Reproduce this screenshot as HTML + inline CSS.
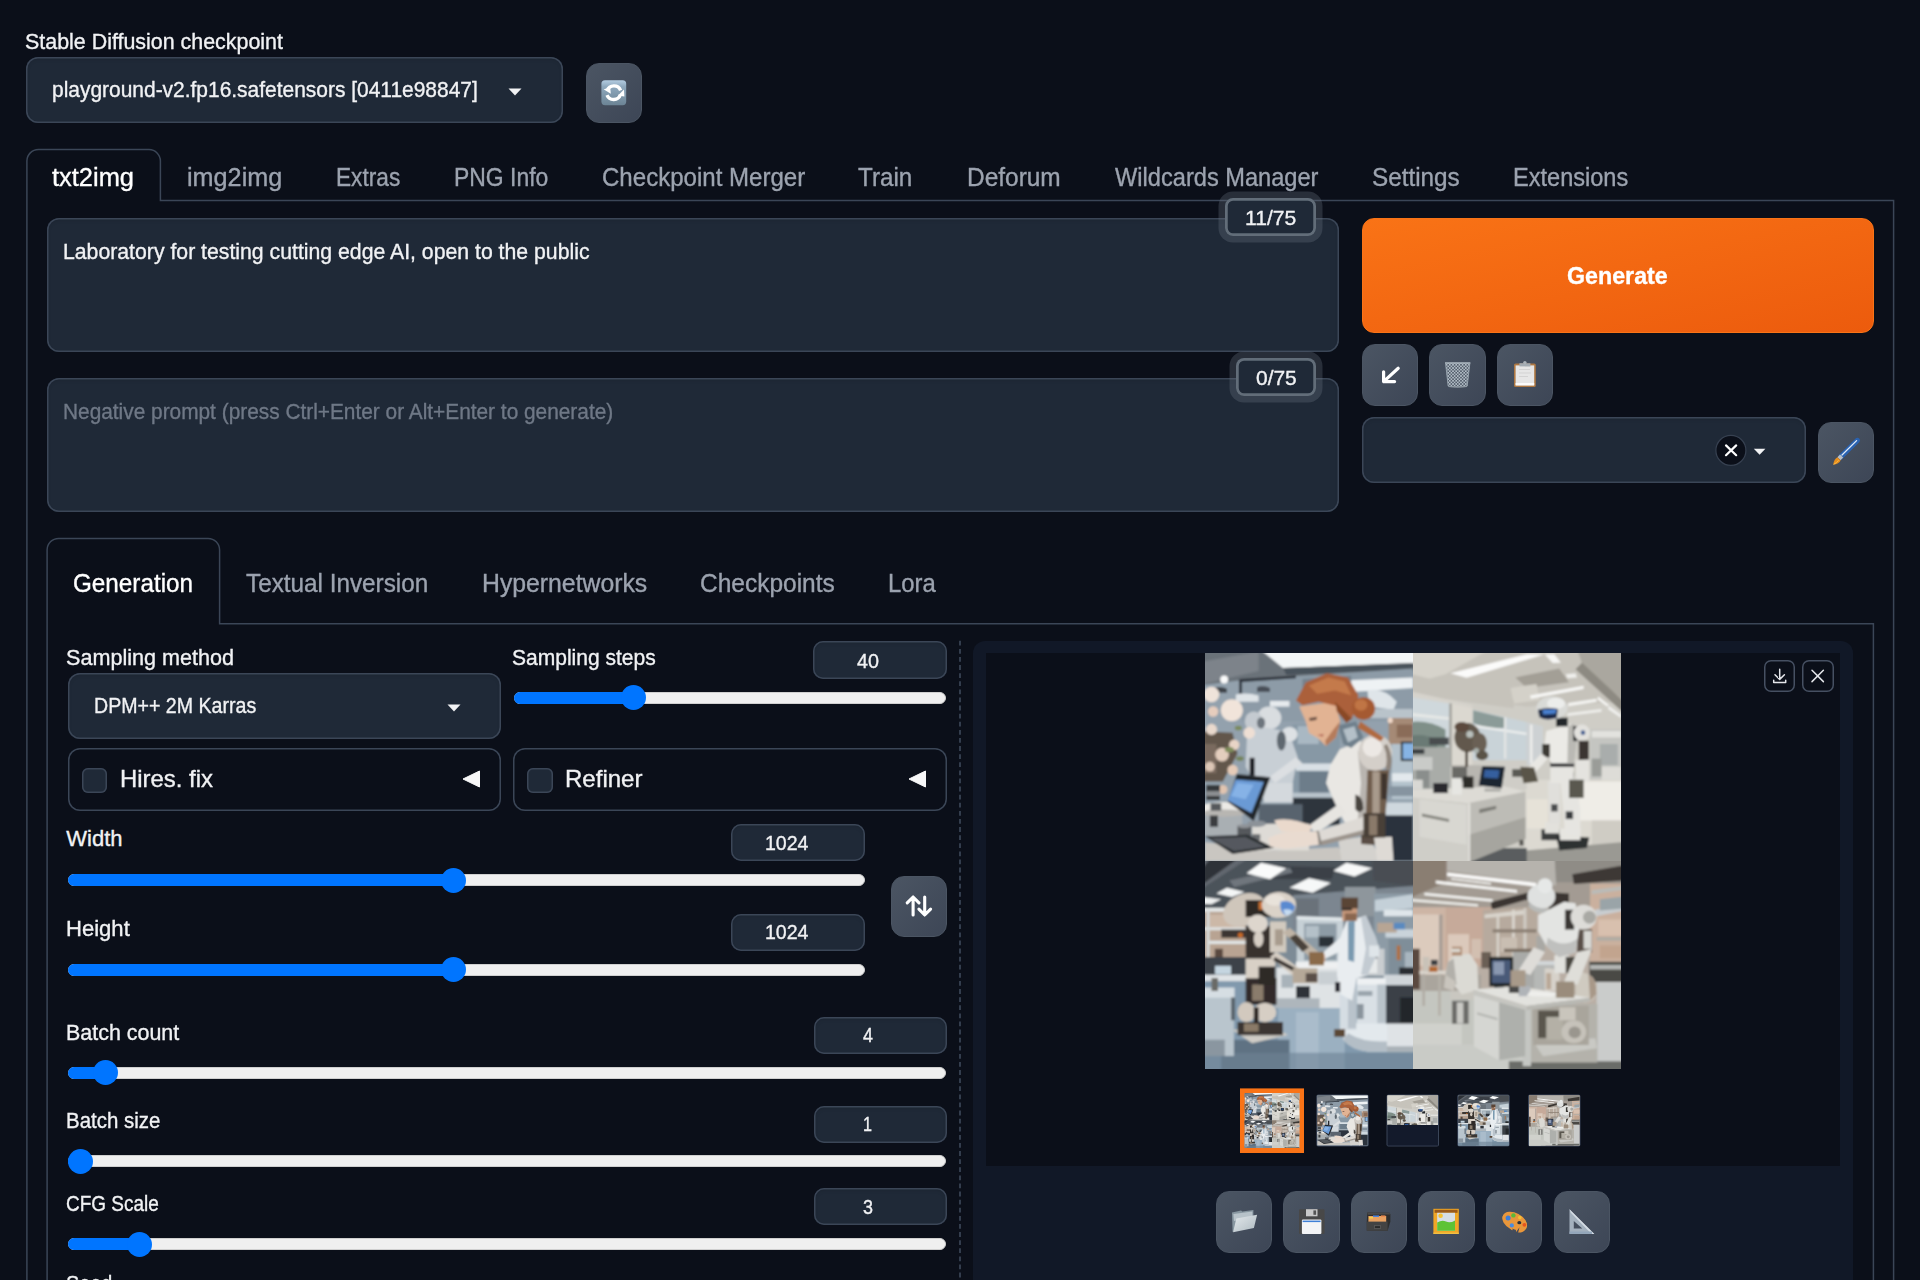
<!DOCTYPE html>
<html><head><meta charset="utf-8"><title>Stable Diffusion</title>
<style>
html,body{margin:0;padding:0;background:#0b0f19;overflow:hidden;}
#root{position:relative;width:1920px;height:1280px;overflow:hidden;background:#0b0f19;}
body{width:1920px;height:1280px;overflow:hidden;position:relative;font-family:"Liberation Sans",sans-serif;}
.b{position:absolute;box-sizing:border-box;}
.t{position:absolute;white-space:nowrap;line-height:1;-webkit-text-stroke:0.35px currentColor;transform-origin:0 50%;display:inline-block;}
.inp{background:#1f2937;border-radius:12px;box-shadow:inset 0 0 0 1.5px #3b4657,inset 0 2px 4px rgba(0,0,0,.12);}
.num{background:#1f2937;border-radius:10px;box-shadow:inset 0 0 0 1.5px #3b4657,inset 0 2px 4px rgba(0,0,0,.12);}
.acc{border-radius:12px;box-shadow:inset 0 0 0 1.5px #3b4657;}
.chk{background:#1f2937;border-radius:6px;box-shadow:inset 0 0 0 1.5px #3b4657;}
.btn{background:linear-gradient(to bottom right,#4b5563,#3d4656);border:1px solid #4b5563;border-radius:13px;}
.btn svg{position:absolute;left:-1px;top:-1px;}
.gbtn{background:#0b0f19;border-radius:7px;box-shadow:inset 0 0 0 1.5px #465062;}
.gbtn svg{position:absolute;left:0;top:0;}
.tok{background:#1f2937;border-radius:8px;box-shadow:inset 0 0 0 2.75px #626d79,0 0 0 6.5px rgba(110,118,132,.3);}
.gen{background:linear-gradient(to bottom right,#f97316,#ec5b0d);border-radius:12px;border:1px solid #f97316;}
.trk{background:#efefef;border:1px solid #cfcfcf;border-radius:6px;}
.fil{background:#0075ff;border-radius:6px 0 0 6px;}
.thb{background:#0075ff;border-radius:50%;}
</style></head>
<body>
<div id="root">
<svg class="b" style="left:0;top:0" width="1920" height="1280" viewBox="0 0 1920 1280"><g fill="none" stroke="#3b4657" stroke-width="1.5"><path d="M26.900 1300V161A11.500 11.500 0 0 1 38.400 149.500H149A11.500 11.500 0 0 1 160.400 161V200.600H1893.600V1300"/><path d="M47.100 1300V550A11.500 11.500 0 0 1 58.600 538.400H208A11.500 11.500 0 0 1 219.600 550V623.700H1873.400V1300"/></g></svg>
<div class="b inp" style="left:26px;top:57px;width:537px;height:65.5px;"></div>
<svg class="b" style="left:508px;top:88px" width="14" height="8" viewBox="0 0 14 8"><path d="M0.5 0.5h13L7 7.5z" fill="#f1f2f4"/></svg>
<div class="b btn" style="left:586px;top:62.5px;width:56px;height:60.5px;"><svg width="57" height="62" viewBox="0 0 57 62"><defs><linearGradient id="rfg" x1="0" y1="0" x2="0" y2="1"><stop offset="0" stop-color="#b4cde2"/><stop offset="0.25" stop-color="#8fa9be"/><stop offset="1" stop-color="#6c8495"/></linearGradient></defs>
<rect x="15.4" y="17.2" width="24.8" height="25" rx="3.6" fill="url(#rfg)"/>
<path d="M34.6 27.3A7.2 7.2 0 0 0 21.2 27.6" fill="none" stroke="#fff" stroke-width="3.4"/>
<path d="M17.6 26.2l6.6-1.6 0.6 6.2z" fill="#fff"/>
<path d="M21 32.2A7.2 7.2 0 0 0 34.4 31.8" fill="none" stroke="#fff" stroke-width="3.4"/>
<path d="M38 26.6l0.4 7-6.4-1.2z" fill="#fff"/>
</svg>
</div>
<div class="b inp" style="left:47px;top:218px;width:1292px;height:133.5px;"></div>
<div class="b inp" style="left:47px;top:378px;width:1292px;height:133.5px;"></div>
<div class="b tok" style="left:1225px;top:197.5px;width:91px;height:38px;"></div>
<div class="b tok" style="left:1235.5px;top:357.5px;width:80.5px;height:38px;"></div>
<div class="b gen" style="left:1361.5px;top:217.5px;width:512px;height:115px;"></div>
<div class="b btn" style="left:1361.5px;top:344px;width:56px;height:61.5px;"><svg width="57" height="62" viewBox="0 0 57 62"><path d="M36.200 24.300L21.600 37.600M21.600 27.800V37.600H32.600" fill="none" stroke="#fff" stroke-width="3.200" stroke-linecap="round" stroke-linejoin="round"/></svg>
</div>
<div class="b btn" style="left:1429px;top:344px;width:56.5px;height:61.5px;"><svg width="57" height="62" viewBox="0 0 57 62"><defs><pattern id="mesh" width="3.200" height="3.200" patternUnits="userSpaceOnUse"><rect width="3.200" height="3.200" fill="#5e6a76" fill-opacity="0.55"/><path d="M0 0L3.200 3.200M3.200 0L0 3.200" stroke="#b3bec7" stroke-width="0.800"/></pattern></defs>
<path d="M16.400 19L41 19L38.400 42.200Q28.600 44 19 42.200z" fill="url(#mesh)"/>
<path d="M16 18.200h25.400v1.600H16z" fill="#a9b4bd"/>
<path d="M16.600 19.500L19.200 42M40.800 19.500L38.200 42" stroke="#9aa6b0" stroke-width="0.900" fill="none"/>
<path d="M19.200 41.400Q28.600 43.400 38.200 41.400L38 43Q28.600 44.600 19.400 43z" fill="#8f9aa3"/>
</svg>
</div>
<div class="b btn" style="left:1497px;top:344px;width:56px;height:61.5px;"><svg width="57" height="62" viewBox="0 0 57 62">
<rect x="17" y="19.4" width="21.8" height="23.6" rx="1.6" fill="#ad7742"/>
<rect x="18.6" y="21.4" width="18.6" height="20" fill="#e6e6e6"/>
<rect x="18.6" y="39" width="18.6" height="2.4" fill="#fbfbfb"/>
<path d="M22.4 19.2h11v3.2h-11z" fill="#a3abb2"/>
<circle cx="27.9" cy="18.6" r="1.7" fill="#aab2b9"/>
<path d="M22 25.5h11M22 29h12M22 32.5h9" stroke="#d3d3d3" stroke-width="1"/>
</svg>
</div>
<div class="b inp" style="left:1362px;top:417px;width:443.5px;height:65.5px;"></div>
<svg class="b" style="left:1714px;top:434px" width="60" height="34" viewBox="0 0 60 34"><circle cx="16.900" cy="16.400" r="15" fill="#0b0f19" stroke="#374151" stroke-width="1.200"/><path d="M12 11.400L22.200 21.200M22.200 11.400L12 21.200" stroke="#fff" stroke-width="2.200" stroke-linecap="round"/><path d="M39.800 14.800h11.600l-5.800 6z" fill="#f1f2f4"/></svg>

<div class="b btn" style="left:1817.5px;top:422px;width:56px;height:60.5px;"><svg width="57" height="62" viewBox="0 0 57 62">
<path d="M39.4 18.4L23.2 34.4" stroke="#2a62b0" stroke-width="5.2" stroke-linecap="round"/>
<path d="M38.6 18.6L24 33" stroke="#dfeaf7" stroke-width="1.3" stroke-linecap="round"/>
<path d="M23.6 34L21 36.7" stroke="#b9bec4" stroke-width="4.4"/>
<path d="M22.6 38.4Q21 42 15.2 42.6Q16 37 19.4 35.2z" fill="#e98f1c"/>
<path d="M20.6 38.2Q18.6 41 15.6 42.4" stroke="#f7bb4c" stroke-width="1" fill="none"/>
</svg>
</div>
<div class="b inp" style="left:67.5px;top:672.5px;width:433.5px;height:66.25px;"></div>
<svg class="b" style="left:447px;top:703.5px" width="14" height="8" viewBox="0 0 14 8"><path d="M0.5 0.5h13L7 7.5z" fill="#f1f2f4"/></svg>
<div class="b acc" style="left:67.5px;top:747.5px;width:433.5px;height:63px;"></div>
<div class="b chk" style="left:82px;top:768px;width:25px;height:25px;"></div>
<svg class="b" style="left:462px;top:769.5px" width="19" height="18" viewBox="0 0 19 18"><path d="M1 9L17.5 1v16z" fill="#f7f7f8" stroke="#f7f7f8" stroke-width="1" stroke-linejoin="round"/></svg>
<div class="b acc" style="left:513px;top:747.5px;width:434px;height:63px;"></div>
<div class="b chk" style="left:527px;top:768px;width:25.5px;height:25px;"></div>
<svg class="b" style="left:908px;top:769.5px" width="19" height="18" viewBox="0 0 19 18"><path d="M1 9L17.5 1v16z" fill="#f7f7f8" stroke="#f7f7f8" stroke-width="1" stroke-linejoin="round"/></svg>
<div class="b num" style="left:813px;top:641px;width:134px;height:37.75px;"></div>
<div class="b num" style="left:731px;top:823.75px;width:134px;height:37.25px;"></div>
<div class="b num" style="left:731px;top:913.5px;width:134px;height:37px;"></div>
<div class="b num" style="left:813.5px;top:1016.5px;width:133px;height:37px;"></div>
<div class="b num" style="left:813.5px;top:1105.5px;width:133px;height:37px;"></div>
<div class="b num" style="left:813.5px;top:1188px;width:133px;height:37px;"></div>
<div class="b trk" style="left:513.75px;top:691.75px;width:432.25px;height:12px;"></div><div class="b fil" style="left:513.75px;top:691.75px;width:119.25px;height:12px;"></div><div class="b thb" style="left:620.5px;top:685.25px;width:25px;height:25px;"></div>
<div class="b trk" style="left:68px;top:874px;width:796.5px;height:12px;"></div><div class="b fil" style="left:68px;top:874px;width:385.75px;height:12px;"></div><div class="b thb" style="left:441.25px;top:867.5px;width:25px;height:25px;"></div>
<div class="b trk" style="left:68px;top:963.75px;width:796.5px;height:12px;"></div><div class="b fil" style="left:68px;top:963.75px;width:385.75px;height:12px;"></div><div class="b thb" style="left:441.25px;top:957.25px;width:25px;height:25px;"></div>
<div class="b trk" style="left:68px;top:1066.5px;width:878px;height:12px;"></div><div class="b fil" style="left:68px;top:1066.5px;width:37.5px;height:12px;"></div><div class="b thb" style="left:93px;top:1060px;width:25px;height:25px;"></div>
<div class="b trk" style="left:68px;top:1155px;width:878px;height:12px;"></div><div class="b fil" style="left:68px;top:1155px;width:12.5px;height:12px;"></div><div class="b thb" style="left:68px;top:1148.5px;width:25px;height:25px;"></div>
<div class="b trk" style="left:68px;top:1238px;width:878px;height:12px;"></div><div class="b fil" style="left:68px;top:1238px;width:71px;height:12px;"></div><div class="b thb" style="left:126.5px;top:1231.5px;width:25px;height:25px;"></div>
<div class="b btn" style="left:891px;top:876px;width:56px;height:61px;"><svg width="57" height="62" viewBox="0 0 57 62"><path d="M22.1 39V21.2M16.2 26.8L22.1 21l5.9 5.8M33.7 21v17.8M27.9 33.2l5.8 5.8l5.9-5.8" fill="none" stroke="#fff" stroke-width="3.1" stroke-linecap="round" stroke-linejoin="round"/></svg>
</div>
<svg class="b" style="left:955px;top:640px" width="10" height="640" viewBox="0 0 10 640"><path d="M5 0.800V640" stroke="#3b4657" stroke-width="1.700" stroke-dasharray="4.800 3.300" fill="none"/></svg>
<div class="b" style="left:973px;top:641px;width:880px;height:759px;background:#111827;border-radius:12px;"></div>
<div class="b" style="left:986px;top:653px;width:854px;height:512.5px;background:#0b0f19;"></div>
<svg class="b" style="left:1205px;top:653px" width="416" height="416" viewBox="0 0 416 416">
<defs><filter id="bl" filterUnits="userSpaceOnUse" x="0" y="0" width="1280" height="1280"><feGaussianBlur stdDeviation="6" edgeMode="duplicate"/></filter></defs>
<svg x="0" y="0" width="208" height="208" viewBox="0 0 1280 1280" preserveAspectRatio="none"><g filter="url(#bl)"><g id="q1">
<rect x="-100" y="-100" width="1480" height="1480" fill="#93a1ad"/>
<!-- ceiling -->
<path d="M-50 -50H1330V110L480 150L210 170L-50 200z" fill="#6b7279"/>
<path d="M-50 60L330 -10V110L-50 200z" fill="#7d838a"/>
<path d="M330 -30H1330V62L480 92z" fill="#f3f6f7"/>
<path d="M480 92L1280 62V100L500 135z" fill="#4a525b"/>
<circle cx="118" cy="163" r="24" fill="#fbfbfb"/>
<!-- glass wall -->
<path d="M215 165L1280 95V420L225 420z" fill="#8d9ba7"/>
<path d="M210 160L560 138V156L228 178V250H210z" fill="#2e343c"/>
<path d="M890 168L1280 150V215L920 238z" fill="#eef2f4"/>
<path d="M600 160L900 140V250L600 280z" fill="#74828e"/>
<path d="M1000 230Q1100 210 1180 300L1160 350L1010 330z" fill="#dfe5e9"/>
<path d="M1010 345H1280V400H1010z" fill="#b9c3ca"/>
<path d="M1130 400H1280V560H1130z" fill="#a58a76"/>
<path d="M1180 440H1280V520H1180z" fill="#8a6c58"/>
<circle cx="1140" cy="415" r="16" fill="#f0d8c8"/>
<!-- left shelf bits -->
<path d="M60 215Q100 200 135 220V245H60z" fill="#3d434a"/>
<path d="M320 210Q360 195 400 215V240H320z" fill="#4a5058"/>
<path d="M190 255Q260 240 330 262V300H190z" fill="#dfe4e8"/>
<path d="M400 295H520V330H400z" fill="#e6eaed"/>
<!-- right background -->
<path d="M1150 560H1280V900H1150z" fill="#b4c2cc"/>
<path d="M1205 545H1280V665H1205z" fill="#2a3038"/>
<path d="M1218 556H1280V652H1218z" fill="#86b4e4"/>
<path d="M1150 740H1280V790H1150z" fill="#e3e9ed"/>
<path d="M1130 820H1280V880H1130z" fill="#8694a0"/>
<path d="M1110 920H1280V1000H1110z" fill="#cfd8de"/>
<path d="M1090 1000H1280V1280H1090z" fill="#2b323c"/>
<!-- center background -->
<path d="M540 440H830V900H540z" fill="#8798a5"/>
<path d="M570 450H700V560H570z" fill="#a9b8c3"/>
<path d="M560 680H790V725H560z" fill="#d9e0e5"/>
<path d="M580 730H760V860H580z" fill="#6d7d8a"/>
<path d="M540 870H830V1060H540z" fill="#2d343e"/>
<path d="M540 860H800V890H540z" fill="#b9c4cc"/>
<path d="M330 930H600V1060H330z" fill="#59636e"/>
<!-- blurred bg robot -->
<ellipse cx="395" cy="400" rx="75" ry="70" fill="#d9dde0"/>
<ellipse cx="300" cy="420" rx="55" ry="60" fill="#c4cad0"/>
<path d="M260 470Q400 440 520 500L570 640L520 900H360L250 700z" fill="#c8cfd5"/>
<ellipse cx="520" cy="500" rx="50" ry="45" fill="#dde1e4"/>
<path d="M560 640L600 680L430 800L400 760z" fill="#dcdfe2"/>
<ellipse cx="470" cy="540" rx="28" ry="60" fill="#5f6870"/>
<ellipse cx="345" cy="430" rx="25" ry="35" fill="#6d757d"/>
<path d="M380 800H540V920H360z" fill="#d4d9dd"/>
<!-- flowers -->
<path d="M-50 480L170 490L200 620L110 790L-50 790z" fill="#62564c"/>
<path d="M-50 560H70V740H-50z" fill="#7a6a5e"/>
<circle cx="40" cy="470" r="34" fill="#e9d9cd"/>
<circle cx="30" cy="700" r="30" fill="#dcc6b6"/>
<circle cx="40" cy="255" r="48" fill="#efe3da"/>
<circle cx="165" cy="352" r="68" fill="#f1e4da"/>
<circle cx="50" cy="360" r="32" fill="#e6cdbd"/>
<circle cx="272" cy="492" r="36" fill="#eedfd4"/>
<circle cx="180" cy="565" r="32" fill="#e8d4c6"/>
<circle cx="105" cy="625" r="42" fill="#e4cebe"/>
<circle cx="170" cy="720" r="32" fill="#e5cbb8"/>
<circle cx="110" cy="840" r="28" fill="#e0c4b0"/>
<ellipse cx="150" cy="595" rx="28" ry="16" fill="#7e8c5a"/>
<ellipse cx="205" cy="462" rx="22" ry="14" fill="#7a8a5c"/>
<ellipse cx="215" cy="650" rx="24" ry="14" fill="#74845a"/>
<path d="M275 645H305V755H275z" fill="#16181c"/>
<!-- tray + objects -->
<path d="M0 990H230V1125H0z" fill="#a9afb3"/>
<ellipse cx="115" cy="957" rx="150" ry="40" fill="#eceae6"/>
<ellipse cx="115" cy="985" rx="140" ry="22" fill="#b8b6b2"/>
<path d="M8 812H92V905H8z" fill="#35373a"/>
<path d="M8 850H92V880H8z" fill="#8c8f92"/>
<path d="M34 925H100V970H34z" fill="#55595c"/>
<path d="M30 1000H80V1070H30z" fill="#3a3d41"/>
<!-- laptop -->
<path d="M195 745L402 765L300 1035L255 1000L140 915z" fill="#22252b"/>
<path d="M188 778L362 792L286 985L140 908z" fill="#6a9ad5"/>
<path d="M200 800L300 810L250 900L160 880z" fill="#86b2e6"/>
<!-- desk -->
<path d="M0 1165L420 1215L820 1195L880 1280H0z" fill="#c9c6c1"/>
<path d="M290 1050H640V1215H290z" fill="#dedbd6"/>
<ellipse cx="318" cy="1050" rx="58" ry="20" fill="#8c9298"/>
<path d="M200 1062H285V1135H200z" fill="#55585c"/>
<ellipse cx="242" cy="1066" rx="42" ry="12" fill="#8e9296"/>
<path d="M290 1115H340V1150H290z" fill="#6a6d70"/>
<path d="M0 1128L262 1118L425 1198L170 1237z" fill="#2b2d32"/>
<path d="M30 1140L250 1132L370 1192L180 1218z" fill="#55595e"/>
<!-- torso -->
<path d="M830 592L960 540L1010 700L995 900L1005 1015L860 1045L800 925L745 800L772 690z" fill="#e9e7e3"/>
<path d="M940 600L1010 700L995 900L1005 1015L940 1030L960 800z" fill="#b9b5b0"/>
<path d="M925 870Q975 880 975 960Q950 1000 925 960z" fill="#4a4540"/>
<path d="M820 1150L1000 1128L1095 1280H840z" fill="#d4d2ce"/>
<path d="M960 1095L1090 1100V1185L960 1175z" fill="#5a4e44"/>
<path d="M1040 1135L1150 1130L1160 1280H1060z" fill="#dedad5"/>
<!-- arms -->
<path d="M640 1062L830 925L870 985L680 1112z" fill="#e7e5e1"/>
<path d="M680 1100L1000 1000L1040 1095L720 1180z" fill="#dedad5"/>
<path d="M700 1160L1030 1075L1040 1100L720 1185z" fill="#9c948d"/>
<path d="M672 1098L700 1092L720 1180L690 1186z" fill="#8a8681"/>
<path d="M425 1030Q520 1005 660 1065L640 1105L470 1098z" fill="#ead9cc"/>
<path d="M388 1140Q500 1080 690 1100L700 1180L500 1205L400 1190z" fill="#e9dbd0"/>
<!-- shoulder + mech arm -->
<path d="M1000 720H1135L1110 1000H990z" fill="#6f5d4d"/>
<path d="M1030 730H1075V990H1030z" fill="#a89a8c"/>
<path d="M1085 740H1120V900H1085z" fill="#3f362e"/>
<path d="M975 985H1110V1135H975z" fill="#4a4038"/>
<path d="M1010 1000H1060V1120H1010z" fill="#8a7a6a"/>
<ellipse cx="1048" cy="612" rx="104" ry="112" fill="#d4cfc9"/>
<ellipse cx="1030" cy="580" rx="60" ry="60" fill="#ece8e4"/>
<path d="M1120 560Q1165 640 1140 720L1110 715Q1130 640 1100 570z" fill="#8f857b"/>
<!-- neck -->
<path d="M820 445L930 420L975 520L900 585L850 560z" fill="#6f808c"/>
<path d="M850 470L920 450L940 520L880 550z" fill="#b4c0c8"/>
<!-- face -->
<path d="M580 330L800 300L832 420L805 520L745 572L695 525L640 492L620 420z" fill="#e2b393"/>
<path d="M745 572L805 520L832 420L790 470L740 540z" fill="#b57c5c"/>
<path d="M640 400L690 392L685 412L645 418z" fill="#6a5044"/>
<path d="M690 505L730 498L725 515z" fill="#b56a5a"/>
<!-- hair -->
<path d="M560 292L620 182L750 125L880 150L945 262L905 405L822 330L700 300L600 322z" fill="#ab603a"/>
<path d="M640 200L760 150L860 175L900 260L800 230L690 250z" fill="#c47a4c"/>
<path d="M800 300L905 405L870 430L812 360z" fill="#8a4a28"/>
<ellipse cx="975" cy="342" rx="72" ry="70" fill="#a55a32"/>
<ellipse cx="960" cy="320" rx="40" ry="35" fill="#c07545"/>
<path d="M955 420L1100 520L1080 545L940 460z" fill="#b06a40"/>
</g>
</g></svg>
<svg x="208" y="0" width="208" height="208" viewBox="0 0 1280 1280" preserveAspectRatio="none"><g filter="url(#bl)"><g id="q2">
<rect x="-100" y="-100" width="1480" height="1480" fill="#cfcdc6"/>
<!-- ceiling -->
<path d="M-50 -50H1330V300L700 330L0 240z" fill="#c6c3bb"/>
<path d="M-50 -50H520L200 130L-50 200z" fill="#d6d3cb"/>
<path d="M1000 -50H1330V320L1050 90z" fill="#aaa79f"/>
<path d="M1040 60L1330 330V400L1000 100z" fill="#8d8a82"/>
<path d="M630 150L900 95L960 180L700 215z" fill="#a39f96"/>
<path d="M600 215L760 190L780 290L620 310z" fill="#d4d1c9"/>
<path d="M230 125L700 8H810L330 152z" fill="#fbfbfa"/>
<path d="M810 8H870L910 60L860 62z" fill="#f6f6f4"/>
<path d="M940 130L1000 125L1010 150L950 155z" fill="#efefec"/>
<path d="M720 262L1050 202V222L725 282z" fill="#f7f7f5"/>
<path d="M955 308L1130 282V300L955 328z" fill="#f4f4f2"/>
<path d="M950 370L1160 345V362L950 388z" fill="#eeeeeb"/>
<path d="M1140 268L1205 318L1195 330L1135 285z" fill="#f6f6f4"/>
<path d="M1205 325L1280 380V400L1200 345z" fill="#f0f0ee"/>
<!-- walls -->
<path d="M-50 120L620 290V340L-50 250z" fill="#c6c3bb"/>
<path d="M-50 228L365 320V350L-50 270z" fill="#d6d3cc"/>
<!-- windows left -->
<path d="M-50 265L228 310V700H-50z" fill="#cfd8dc"/>
<path d="M-50 430Q80 400 200 470V650H-50z" fill="#7f8f88"/>
<path d="M-50 520Q60 480 150 540V640H-50z" fill="#6a7a74"/>
<path d="M-50 365L228 395V412L-50 385z" fill="#e6e8e6"/>
<path d="M222 310H240V700H222z" fill="#a9a8a2"/>
<path d="M240 312L365 340V700H240z" fill="#dbd8d0"/>
<!-- windows center -->
<path d="M368 350L700 425V660H368z" fill="#c9d3d8"/>
<path d="M370 352L560 398V460Q460 470 370 430z" fill="#8b9b98"/>
<path d="M368 440L700 490V504L368 456z" fill="#eceeed"/>
<path d="M560 395H574V650H560z" fill="#e4e6e5"/>
<path d="M700 425L800 450V690H700z" fill="#cdd1d3"/>
<path d="M720 440H735V680H720z" fill="#eeeeec"/>
<!-- far right -->
<path d="M1090 470H1330V800H1090z" fill="#c4c5c1"/>
<path d="M1100 480H1280V520H1100z" fill="#e2e2de"/>
<path d="M1150 560H1260V690H1150z" fill="#a9adac"/>
<path d="M1160 700H1280V800H1160z" fill="#dddcd7"/>
<path d="M1100 650H1160V760H1100z" fill="#9a9c98"/>
<!-- floor -->
<path d="M690 780H1330V1330H690z" fill="#dcd9d1"/>
<path d="M1020 790H1330V1030H1020z" fill="#efede7"/>
<path d="M700 900H830V1080H700z" fill="#e6e2d8"/>
<path d="M1100 1030H1330V1180H1100z" fill="#cfccc4"/>
<path d="M690 1215L1330 1160V1330H690z" fill="#9a9993"/>
<path d="M-50 1200H700V1330H-50z" fill="#5a5d5e"/>
<!-- back-left equipment -->
<path d="M-50 580H232V840H-50z" fill="#a9aca8"/>
<path d="M100 520H220V565H100z" fill="#4a4e50"/>
<path d="M-50 590H70V622H-50z" fill="#3e4244"/>
<path d="M-50 640H120V720H-50z" fill="#c9cbc8"/>
<path d="M20 720H100V830H20z" fill="#8a8e8c"/>
<path d="M-50 780H60V840H-50z" fill="#d8d8d4"/>
<!-- back counter -->
<path d="M240 690H420V830H240z" fill="#b8b6b0"/>
<path d="M240 700H332V790H240z" fill="#6a6a66"/>
<path d="M560 680H700V840H560z" fill="#cfcdc7"/>
<path d="M610 715H700V762H610z" fill="#5a5a54"/>
<!-- plant -->
<ellipse cx="335" cy="520" rx="80" ry="90" fill="#62594d"/>
<ellipse cx="410" cy="555" rx="45" ry="62" fill="#6a6054"/>
<ellipse cx="300" cy="455" rx="45" ry="30" fill="#5c4a3e"/>
<ellipse cx="425" cy="630" rx="38" ry="30" fill="#5a5246"/>
<path d="M322 600H338V700H322z" fill="#4a4238"/>
<circle cx="350" cy="500" r="22" fill="#b9c0bc"/>
<circle cx="390" cy="600" r="16" fill="#aab2ae"/>
<!-- bench -->
<path d="M-50 842L560 820L692 852L340 925L-50 884z" fill="#dddbd5"/>
<path d="M-50 884L340 925V1330H-50z" fill="#cfcec8"/>
<path d="M40 900L330 935V1180L40 1130z" fill="#d8d7d1"/>
<path d="M340 925L692 854V1145L340 1290z" fill="#bdbcb6"/>
<path d="M340 1120L692 1010V1145L340 1290z" fill="#a6a59f"/>
<path d="M340 925H352V1290H340z" fill="#e6e5e0"/>
<path d="M55 988L222 1022V1040L55 1006z" fill="#86867f"/>
<path d="M408 962L512 940V960L408 986z" fill="#7c7c76"/>
<path d="M655 1150H680V1185H655z" fill="#55554f"/>
<!-- bench items -->
<path d="M125 800H215V862H125z" fill="#2a2c2e"/>
<path d="M240 770H300V872H240z" fill="#e6e6e2"/>
<path d="M308 760H372V832H308z" fill="#2e2e2c"/>
<path d="M425 695L566 700L546 832L405 816z" fill="#1e2530"/>
<path d="M440 718L532 722L524 772L436 766z" fill="#355f9e"/>
<path d="M440 835H540V852H440z" fill="#a9a9a4"/>
<!-- robot -->
<path d="M790 1085H900V1152H790z" fill="#3a3c3e"/>
<path d="M880 1122L1085 1135L1070 1200L900 1215z" fill="#2e3032"/>
<path d="M812 1040H900V1110H812z" fill="#e2e1dc"/>
<path d="M905 1080H1030V1152H905z" fill="#e6e5e0"/>
<path d="M830 790L905 780V1050H838z" fill="#e0dfdb"/>
<path d="M905 760L992 750L1030 960L1030 1130L935 1110L925 960z" fill="#e6e5e1"/>
<path d="M905 735H988V778H905z" fill="#22252a"/>
<path d="M940 975H985V1022H940z" fill="#3a3c40"/>
<path d="M850 930H890V975H850z" fill="#4a4c4e"/>
<path d="M845 700H988V800H845z" fill="#e6e5e1"/>
<path d="M845 674H992V700H845z" fill="#1c1e22"/>
<path d="M820 480L990 430L1012 522L992 680H850L810 562z" fill="#ebeae6"/>
<path d="M955 450L990 430L1012 522L992 680H950z" fill="#bab9b4"/>
<path d="M985 450H1012V542H985z" fill="#26282c"/>
<circle cx="1040" cy="490" r="50" fill="#e2e1dd"/>
<circle cx="1046" cy="490" r="14" fill="#3a5a90"/>
<path d="M1020 540H1082V662H1020z" fill="#3a3632"/>
<path d="M1000 660L1085 655V792H1005z" fill="#e4e3df"/>
<path d="M960 780H1050V892H960z" fill="#5a5850"/>
<path d="M795 560H842V642H795z" fill="#3e3a36"/>
<path d="M790 618L830 650L752 735L712 700z" fill="#e8e7e3"/>
<path d="M660 700L745 705L770 790L680 802z" fill="#5a5448"/>
<path d="M880 398H952V452H880z" fill="#22262a"/>
<ellipse cx="855" cy="338" rx="96" ry="70" fill="#d9dad7"/>
<ellipse cx="880" cy="310" rx="55" ry="35" fill="#ecedeb"/>
<path d="M768 350Q830 330 892 345L885 400Q820 420 778 395z" fill="#1f2c48"/>
<path d="M798 350L882 346L878 372L802 378z" fill="#4a80d0"/>
</g>
</g></svg>
<svg x="0" y="208" width="208" height="208" viewBox="0 0 1280 1280" preserveAspectRatio="none"><g filter="url(#bl)"><g id="q3">
<rect x="-100" y="-100" width="1480" height="1480" fill="#7d8b96"/>
<!-- ceiling -->
<path d="M-50 -50H1330V260L560 230L0 330H-50z" fill="#4c525a"/>
<path d="M-50 -50H320L-50 190z" fill="#62686f"/>
<path d="M60 -50L250 -50L-50 170V90z" fill="#2e3238"/>
<path d="M400 30L800 40L780 110L420 110z" fill="#3a3f46"/>
<path d="M1030 -50H1330V160L1040 120z" fill="#4a4e52"/>
<path d="M150 120L520 40L540 70L180 160z" fill="#70767d"/>
<path d="M345 10L500 45L400 112L255 76z" fill="#fafbfb"/>
<path d="M870 10L1030 45L920 96L790 60z" fill="#f8f9f9"/>
<path d="M640 105L775 135L662 196L520 165z" fill="#f6f8f8"/>
<path d="M135 165L245 190L165 222L70 200z" fill="#f4f6f6"/>
<path d="M-50 218L100 236L40 266L-50 262z" fill="#eef0f0"/>
<!-- back wall -->
<path d="M540 210L1330 150V420H540z" fill="#7c8690"/>
<path d="M860 160H1050V340H860z" fill="#8e969c"/>
<path d="M560 230H700V340H560z" fill="#6a727a"/>
<!-- right shelves -->
<path d="M1040 200H1330V710H1040z" fill="#8d9ba6"/>
<path d="M1045 240L1280 205V290L1045 310z" fill="#c4d0d8"/>
<path d="M1100 300H1280V340H1100z" fill="#dfe6ea"/>
<path d="M1110 420H1330V470H1110z" fill="#c9d3da"/>
<path d="M1060 380H1180V440H1060z" fill="#b7a594"/>
<path d="M1160 380H1230V420H1160z" fill="#5a8ac0"/>
<path d="M1130 480H1330V700H1130z" fill="#7f8e99"/>
<path d="M1180 520H1202V610H1180z" fill="#b07040"/>
<path d="M1230 560H1330V660H1230z" fill="#a9b6bf"/>
<path d="M1195 655H1330V702H1195z" fill="#2a2e32"/>
<!-- left shelves -->
<path d="M-50 290H252V610H-50z" fill="#b8a392"/>
<path d="M30 330H250V410H30z" fill="#ccb8a7"/>
<path d="M-50 288H252V312H-50z" fill="#e4e7e7"/>
<path d="M-50 408H252V426H-50z" fill="#dfe2e2"/>
<path d="M20 490H252V510H20z" fill="#e2e5e5"/>
<path d="M10 300H28V600H10z" fill="#d8dcdc"/>
<path d="M60 540H110V600H60z" fill="#5a4a40"/>
<path d="M-50 590H252V705H-50z" fill="#3c424a"/>
<path d="M62 645H160V698H62z" fill="#c5d5e0"/>
<path d="M-50 700H255V742H-50z" fill="#dfe3e6"/>
<!-- floor -->
<path d="M-50 740H1330V1330H-50z" fill="#8199ad"/>
<path d="M450 880H860V1330H450z" fill="#9bb0c1"/>
<path d="M560 930H700V1330H560z" fill="#aabccb"/>
<path d="M100 1100H520V1330H100z" fill="#5f7283"/>
<path d="M-50 1180H1330V1330H-50z" fill="#6d8294" opacity="0.6"/>
<!-- left cabinet -->
<path d="M-50 790H178V1200H-50z" fill="#b9c5cd"/>
<path d="M-50 778H182V842H-50z" fill="#d6dee3"/>
<path d="M-50 1100H122V1200H-50z" fill="#8a96a0"/>
<path d="M160 840H185V980H160z" fill="#5a646c"/>
<path d="M40 720H80V800H40z" fill="#6a6a66"/>
<!-- glass cabinet -->
<path d="M565 340L850 350V650H565z" fill="#c6d0d6"/>
<path d="M610 385H810V610H610z" fill="#8d9ba5"/>
<path d="M620 400H700V470H620z" fill="#b4c0c8"/>
<path d="M700 465H792V527H700z" fill="#2a3038"/>
<path d="M565 340L850 350V368L565 358z" fill="#e3e9ec"/>
<!-- center machine -->
<path d="M440 655H835V905H440z" fill="#dfe3e5"/>
<path d="M560 620H835V662H560z" fill="#eef0f1"/>
<path d="M560 770H646V846H560z" fill="#2e3238"/>
<path d="M470 700H545V780H470z" fill="#a9b3ba"/>
<path d="M430 845H705V905H430z" fill="#aeb6bc"/>
<path d="M700 680H830V760H700z" fill="#c9cfd3"/>
<!-- mid-right equipment -->
<path d="M960 540H1105V705H960z" fill="#c9cdd0"/>
<path d="M985 545H1060V600H985z" fill="#4a4e52"/>
<path d="M1000 600H1060V690H1000z" fill="#e6e9ea"/>
<path d="M960 560H1000V640H960z" fill="#b08868"/>
<!-- right bench -->
<path d="M1100 700H1330V765H1100z" fill="#d0d6da"/>
<path d="M1110 765H1330V1025H1110z" fill="#3a4046"/>
<path d="M1200 840H1290V1000H1200z" fill="#23272b"/>
<path d="M1120 1000H1330V1172H1120z" fill="#dfe3e6"/>
<path d="M1120 1140H1330V1175H1120z" fill="#aab2b8"/>
<!-- white machine -->
<path d="M935 722H1112V1005H935z" fill="#d9e0e5"/>
<path d="M935 722H1112V760H935z" fill="#eef1f3"/>
<path d="M940 800H1030V830H940z" fill="#9aa4ac"/>
<path d="M936 880H976V972H936z" fill="#8a949c"/>
<path d="M1060 760H1112V1000H1060z" fill="#b9c3ca"/>
<path d="M905 960Q860 1010 850 1100Q900 1160 1000 1172H1120V1000H935z" fill="#e3e9ed"/>
<path d="M850 1100Q900 1160 1000 1172H1120V1110Q980 1120 880 1060z" fill="#b4bec6"/>
<!-- man -->
<path d="M830 640H932V1040H830z" fill="#d5dde3"/>
<path d="M880 700H930V1030H880z" fill="#b9c3cb"/>
<path d="M795 1035H862V1082H795z" fill="#5a4636"/>
<path d="M870 372L990 335L1050 470L1072 545L1000 705L932 722L905 860L835 820L812 700L822 562L738 602L716 572L832 472z" fill="#e9edf0"/>
<path d="M960 350L990 335L1050 470L1072 545L1000 705L960 700L990 540z" fill="#c3cbd2"/>
<path d="M880 372L922 368L918 622L880 610z" fill="#7a9ab0"/>
<path d="M690 575H738V622H690z" fill="#d0a080"/>
<path d="M1010 520H1072V590H1010z" fill="#dfe5e9"/>
<path d="M845 270H936V368H845z" fill="#c99a7c"/>
<path d="M860 322H934V368H860z" fill="#8a6650"/>
<path d="M838 225H942V292H838z" fill="#5a4436"/>
<path d="M840 290H905V304H840z" fill="#2a2624"/>
<path d="M800 745H832V805H800z" fill="#2a2c30"/>
<!-- robot -->
<path d="M170 1040L400 1010L512 1070L290 1122z" fill="#cfccc6"/>
<path d="M200 990H480V1072H200z" fill="#3a3632"/>
<path d="M240 1000H330V1050H240z" fill="#8a7a68"/>
<path d="M250 720H440V885H250z" fill="#302c2a"/>
<path d="M290 760H360V860H290z" fill="#8a7c6c"/>
<ellipse cx="255" cy="930" rx="55" ry="62" fill="#d2c9be"/>
<ellipse cx="368" cy="932" rx="70" ry="60" fill="#d6cec4"/>
<path d="M300 900H330V1000H300z" fill="#2a2624"/>
<path d="M250 570H432V722H250z" fill="#d8d0c6"/>
<path d="M330 650H432V762H330z" fill="#2e2a28"/>
<path d="M250 400H425V600H250z" fill="#38332f"/>
<path d="M400 372H500V562H400z" fill="#d2cabf"/>
<path d="M430 420H480V520H430z" fill="#a89c8e"/>
<path d="M100 422H252V472H100z" fill="#3a3632"/>
<circle cx="218" cy="456" r="16" fill="#c86a28"/>
<path d="M480 440L520 410L700 560L668 610z" fill="#bfb4a6"/>
<path d="M520 470L560 450L640 530L600 560z" fill="#4a423a"/>
<path d="M640 560H732V642H640z" fill="#8a6a4a"/>
<path d="M400 590L440 560L580 660L548 712z" fill="#d5cdc3"/>
<path d="M430 590L560 660L545 680L420 612z" fill="#3a3632"/>
<path d="M540 660H692V752H540z" fill="#b5a898"/>
<path d="M620 690H692V745H620z" fill="#5a5048"/>
<ellipse cx="240" cy="300" rx="135" ry="95" transform="rotate(-25 240 300)" fill="#cfc6bb"/>
<path d="M250 240H405V345H250z" fill="#2e2a28"/>
<path d="M330 250H380V300H330z" fill="#c87030"/>
<ellipse cx="325" cy="385" rx="62" ry="56" fill="#ddd6cd"/>
<ellipse cx="330" cy="480" rx="30" ry="50" fill="#d6cec4"/>
<ellipse cx="455" cy="270" rx="105" ry="80" fill="#dad2c8"/>
<ellipse cx="430" cy="240" rx="60" ry="35" fill="#e8e2da"/>
<path d="M465 250Q520 235 555 280Q545 330 495 335Q455 310 465 250z" fill="#5a8ad0"/>
<path d="M480 300Q520 290 540 310Q520 335 495 332z" fill="#c6dcf2"/>
</g>
</g></svg>
<svg x="208" y="208" width="208" height="208" viewBox="0 0 1280 1280" preserveAspectRatio="none"><g filter="url(#bl)"><g id="q4">
<rect x="-100" y="-100" width="1480" height="1480" fill="#b9aea4"/>
<!-- ceiling -->
<path d="M-50 -50H1330V300L480 320L0 290H-50z" fill="#a39b93"/>
<path d="M-50 -50H205V130L-50 240z" fill="#8a7e72"/>
<path d="M210 -50H880V150L210 60z" fill="#b6b3ad"/>
<path d="M870 -50H1330V130L880 130z" fill="#8f8c86"/>
<path d="M980 82L1330 20V118L990 142z" fill="#3c3834"/>
<path d="M480 252L722 190V232L480 302z" fill="#3a3632"/>
<path d="M210 70L760 135V158L210 92z" fill="#fbfbfa"/>
<path d="M140 120L640 178V196L140 138z" fill="#f7f7f5"/>
<path d="M235 104L480 134V146L235 116z" fill="#efefec"/>
<path d="M70 195L490 235V250L70 210z" fill="#f5f5f3"/>
<path d="M-50 230L400 266V280L-50 246z" fill="#eeeeea"/>
<!-- walls -->
<path d="M-50 285H205V720H-50z" fill="#cdb5a5"/>
<path d="M-50 330H172V645H-50z" fill="#dccbbd"/>
<path d="M160 330H182V700H160z" fill="#a89e96"/>
<path d="M200 285H485V650H200z" fill="#c6aa9a"/>
<path d="M215 450H345V622H215z" fill="#dbc9bb"/>
<path d="M360 480H420V600H360z" fill="#d2bfb0"/>
<!-- glass shelves center -->
<path d="M430 300L760 280V630H430z" fill="#b7aa9e"/>
<path d="M440 330L690 300V330L440 352z" fill="#d8d3cb"/>
<path d="M515 330H530V620H515z" fill="#d8d4cc"/>
<path d="M610 300H626V620H610z" fill="#dcd8d0"/>
<path d="M680 290H698V620H680z" fill="#d0ccc4"/>
<path d="M490 420H760V440H490z" fill="#8a7e72"/>
<path d="M540 470H640V560H540z" fill="#c9beb2"/>
<path d="M560 540H760V560H560z" fill="#7a6e62"/>
<path d="M420 560H480V660H420z" fill="#6a5e54"/>
<!-- right bg -->
<path d="M1090 140H1330V720H1090z" fill="#cab09e"/>
<path d="M1120 300L1330 260V300L1120 342z" fill="#c9cdd0"/>
<path d="M1150 235L1330 215V290L1150 305z" fill="#9aa4a8"/>
<path d="M1100 180L1330 150V172L1100 205z" fill="#b9bbb8"/>
<path d="M1130 468H1330V490H1130z" fill="#b0aca4"/>
<path d="M1140 360H1330V460H1140z" fill="#d8c0ae"/>
<path d="M1150 520H1330V600H1150z" fill="#c2a48e"/>
<path d="M1085 620H1330V745H1085z" fill="#4a4844"/>
<path d="M1090 640H1330V668H1090z" fill="#b4b6b4"/>
<path d="M1130 745H1330V1330H1130z" fill="#cacccb"/>
<!-- floor -->
<path d="M-50 700H420V820H-50z" fill="#aaa59d"/>
<path d="M-50 800H420V1330H-50z" fill="#c4c6c0"/>
<path d="M-50 1000H300V1330H-50z" fill="#d0d1cc"/>
<path d="M-50 1130H720V1330H-50z" fill="#c9cbc6"/>
<path d="M590 1232H1330V1330H590z" fill="#6a6c68"/>
<!-- left equipment + table -->
<path d="M-50 540H42V790H-50z" fill="#5a4a40"/>
<path d="M40 675H202V697H40z" fill="#dad6ce"/>
<path d="M58 695H74V892H58z" fill="#b0aca4"/>
<path d="M155 695H171V952H155z" fill="#b4b0a8"/>
<path d="M95 650H150V682H95z" fill="#b06830"/>
<path d="M110 608H152V642H110z" fill="#3a3c40"/>
<path d="M60 590H100V680H60z" fill="#c9c2b8"/>
<!-- person -->
<path d="M240 860H342V1002H240z" fill="#6a6a68"/>
<path d="M270 870H310V1000H270z" fill="#c9c9c4"/>
<path d="M228 802H382V852H228z" fill="#c9c7c0"/>
<path d="M250 582L350 570L396 640L402 792L300 822L250 762L200 702L215 622z" fill="#dbdad4"/>
<path d="M215 622L250 600L268 760L250 762L200 702z" fill="#b2b0aa"/>
<path d="M200 700L260 740L250 800L190 780z" fill="#c9c5bd"/>
<path d="M240 527H302V582H240z" fill="#b09078"/>
<path d="M236 540H290V560H236z" fill="#dcd8d0"/>
<!-- center bg machine -->
<path d="M615 560H762V782H615z" fill="#a9aaa8"/>
<path d="M745 620H882V792H745z" fill="#b6b8b6"/>
<path d="M760 615H890V640H760z" fill="#d2d6d8"/>
<!-- monitor -->
<path d="M470 590H616V772H470z" fill="#1e2024"/>
<path d="M485 610H600V752H485z" fill="#4a5a78"/>
<path d="M495 620H560V700H495z" fill="#8a98b0"/>
<path d="M500 770H560V790H500z" fill="#3a3c40"/>
<!-- robot lower (behind desk) -->
<path d="M720 880H1135V1240H720z" fill="#b4b2ab"/>
<path d="M740 1110L1122 1090L1132 1152L800 1202z" fill="#c9c9c4"/>
<path d="M740 890H1082V1132H740z" fill="#a9a59c"/>
<path d="M770 920H900V1090H770z" fill="#5a564e"/>
<path d="M820 960H920V1100H820z" fill="#b4b0a6"/>
<ellipse cx="990" cy="1052" rx="76" ry="70" fill="#c6c2ba"/>
<ellipse cx="995" cy="1055" rx="38" ry="36" fill="#9a968e"/>
<path d="M900 900H1000V980H900z" fill="#c9c5bc"/>
<!-- hips -->
<path d="M1000 682Q1130 680 1132 800Q1120 870 1060 872L1000 860z" fill="#cfcac0"/>
<path d="M1080 700Q1132 720 1128 820L1090 860z" fill="#a89888"/>
<path d="M810 662Q880 650 902 700V802H812z" fill="#d7d2ca"/>
<path d="M820 690H850V790H820z" fill="#b9a898"/>
<path d="M870 580H962V690H870z" fill="#e1e1dd"/>
<path d="M940 590H1002V690H940z" fill="#4a4640"/>
<!-- desk -->
<path d="M675 890H726V1262H675z" fill="#c4c6c2"/>
<path d="M375 822L530 866V1226L375 1142z" fill="#d5d6d2"/>
<path d="M530 866L690 902V1202L530 1226z" fill="#aeb0ac"/>
<path d="M395 930L520 966V980L395 944z" fill="#b4b5b1"/>
<path d="M370 790L640 770L1088 842L700 892z" fill="#e2e2de"/>
<path d="M370 792L700 892V918L370 824z" fill="#c6c6c1"/>
<path d="M700 892L1088 842V866L700 918z" fill="#b9b9b4"/>
<path d="M650 770H722V832H650z" fill="#b0b4b8"/>
<path d="M590 762H652V812H590z" fill="#4a4a48"/>
<path d="M720 800L880 810L860 835L700 830z" fill="#eeeeeb"/>
<!-- robot upper -->
<path d="M760 462H812V562H760z" fill="#a9a8a4"/>
<path d="M742 530L812 560L722 702L650 672z" fill="#dedcd8"/>
<path d="M600 672H692V772H600z" fill="#a89a8a"/>
<path d="M1010 420H1102V562H1010z" fill="#5a5048"/>
<path d="M1050 430H1100V540H1050z" fill="#d8d8d4"/>
<path d="M1010 562L1102 540L1012 762L930 742z" fill="#dfded9"/>
<path d="M880 742H992V842H880z" fill="#9a8c7c"/>
<path d="M830 190L960 200V335L840 330z" fill="#3a3632"/>
<path d="M770 332L930 250L1000 260L1022 420L1000 562L900 592L820 522L770 432z" fill="#e3e4e2"/>
<path d="M820 522L900 592L1000 562L1010 480Q920 540 830 470z" fill="#bfc0be"/>
<path d="M935 300H992V422H935z" fill="#3a3834"/>
<ellipse cx="1050" cy="345" rx="80" ry="76" fill="#dddcd8"/>
<circle cx="1086" cy="346" r="40" fill="#a9a9a4"/>
<ellipse cx="790" cy="218" rx="86" ry="76" fill="#dfe1e0"/>
<circle cx="812" cy="152" r="46" fill="#e6e8e7"/>
<path d="M715 250Q760 300 840 290L800 320Q740 320 712 280z" fill="#b8bab8"/>
</g>
</g></svg>
</svg>
<svg class="b" style="left:1236px;top:1084px" width="352" height="74" viewBox="0 0 352 74">
<rect x="4.00" y="4.40" width="64" height="64.600" fill="#f97316"/>
<svg x="8.70" y="9.10" width="27.30" height="27.60" viewBox="0 0 1280 1280" preserveAspectRatio="none"><use href="#q1"/></svg>
<svg x="36.00" y="9.10" width="27.30" height="27.60" viewBox="0 0 1280 1280" preserveAspectRatio="none"><use href="#q2"/></svg>
<svg x="8.70" y="36.40" width="27.30" height="27.60" viewBox="0 0 1280 1280" preserveAspectRatio="none"><use href="#q3"/></svg>
<svg x="36.00" y="36.40" width="27.30" height="27.60" viewBox="0 0 1280 1280" preserveAspectRatio="none"><use href="#q4"/></svg>
<rect x="80.25" y="10.60" width="52.500" height="52" rx="2" fill="#3a4558"/>
<svg x="81.25" y="11.60" width="50.50" height="50.00" viewBox="0 0 1280 1280" preserveAspectRatio="none"><use href="#q1"/></svg>
<rect x="221.25" y="10.60" width="52.500" height="52" rx="2" fill="#3a4558"/>
<svg x="222.25" y="11.60" width="50.50" height="50.00" viewBox="0 0 1280 1280" preserveAspectRatio="none"><use href="#q3"/></svg>
<rect x="292.00" y="10.60" width="52.500" height="52" rx="2" fill="#3a4558"/>
<svg x="293.00" y="11.60" width="50.50" height="50.00" viewBox="0 0 1280 1280" preserveAspectRatio="none"><use href="#q4"/></svg>
<rect x="150.50" y="10.60" width="52.500" height="52" rx="2" fill="#3a4558"/>
<rect x="151.50" y="11.60" width="50.500" height="50" fill="#131a2b"/>
<svg x="151.50" y="11.60" width="50.50" height="29.40" viewBox="0 0 1280 745" preserveAspectRatio="none"><use href="#q2"/></svg>
</svg>
<div class="b gbtn" style="left:1763.5px;top:660px;width:31.5px;height:31.5px;"><svg width="32" height="32" viewBox="0 0 32 32"><path d="M15.700 9.200V19.200M11 14.800l4.700 4.600l4.700-4.600M9.700 20.200v2.400h12v-2.400" fill="none" stroke="#e5e7eb" stroke-width="1.5" stroke-linecap="round" stroke-linejoin="round"/></svg>
</div>
<div class="b gbtn" style="left:1802px;top:660px;width:31.5px;height:31.5px;"><svg width="32" height="32" viewBox="0 0 32 32"><path d="M10 10.200L21.400 21.600M21.400 10.200L10 21.600" fill="none" stroke="#e5e7eb" stroke-width="1.5" stroke-linecap="round"/></svg>
</div>
<div class="b btn" style="left:1215.75px;top:1191px;width:56.25px;height:61.5px;"><svg width="57" height="62" viewBox="0 0 57 62"><defs><linearGradient id="fdg" x1="0" y1="0" x2="1" y2="1"><stop offset="0" stop-color="#e4e9ec"/><stop offset="1" stop-color="#aebac1"/></linearGradient></defs>
<path d="M16 21.6L25.1 19.4L26.2 20.6L37.4 18.9V30L16.6 41z" fill="#8796a0"/>
<path d="M17.4 23L36.4 20.4V26L18 30z" fill="#b7c2c9"/>
<path d="M20.3 27.4L41.1 23.7L37.9 37L17.1 41.3z" fill="url(#fdg)"/>
</svg>
</div>
<div class="b btn" style="left:1283.25px;top:1191px;width:56.25px;height:61.5px;"><svg width="57" height="62" viewBox="0 0 57 62">
<rect x="16" y="18.2" width="25.6" height="24.7" rx="1.2" fill="#484848"/>
<rect x="23" y="18.2" width="11.5" height="7.1" fill="#c9c9c9"/>
<rect x="30.4" y="19.4" width="2.7" height="4.4" fill="#555"/>
<rect x="18.9" y="28.5" width="19.5" height="14.4" rx="1" fill="#f3f4f6"/>
<rect x="19.6" y="29.6" width="18" height="1.5" fill="#3f80d6"/>
</svg>
</div>
<div class="b btn" style="left:1350.75px;top:1191px;width:56.25px;height:61.5px;"><svg width="57" height="62" viewBox="0 0 57 62">
<path d="M16.3 21.4L38.4 21.8L39.4 23.6V30.6L36.6 39.7L15.8 39.4V30.6z" fill="#2e2e2e"/>
<path d="M16.3 21.4L38.4 21.8L39.4 23.6L16.8 23.8z" fill="#4a4a4a"/>
<rect x="17.4" y="25" width="17.8" height="6.2" fill="#e9a262"/>
<rect x="22" y="24.4" width="6" height="1.6" fill="#4d84d9"/>
<rect x="18" y="26" width="4" height="1.5" fill="#f2d14a"/>
<rect x="30" y="24.4" width="4.4" height="1.6" fill="#ea8a50"/>
<path d="M15.8 30.6H36.6V39.7H15.8z" fill="#434343"/>
<rect x="23.3" y="34.8" width="6.4" height="2.8" fill="#2a2a2a" stroke="#6a6a6a" stroke-width="0.6"/>
</svg>
</div>
<div class="b btn" style="left:1418.25px;top:1191px;width:56.25px;height:61.5px;"><svg width="57" height="62" viewBox="0 0 57 62">
<rect x="15.4" y="17.8" width="25.4" height="25.1" fill="#f0a726"/>
<rect x="16.6" y="18.8" width="23" height="3" fill="#9a5a1c"/>
<rect x="19.2" y="21.8" width="17.8" height="17.9" fill="#d6dee6"/>
<path d="M19.2 31.6Q24 28.6 28 30.6T37 29.4V39.7H19.2z" fill="#5dc335"/>
<circle cx="22.6" cy="24.8" r="2.3" fill="#f6c232"/>
<rect x="15.4" y="41.6" width="25.4" height="1.3" fill="#f6c445"/>
</svg>
</div>
<div class="b btn" style="left:1485.75px;top:1191px;width:56.25px;height:61.5px;"><svg width="57" height="62" viewBox="0 0 57 62">
<g transform="rotate(28 28.7 31)"><path d="M15.4 31a13.3 8.2 0 0 1 26.6 0q0 5-5 7.6q-3 1.2-3.6-1.6q-.4-2.4-3-1.6q-2 1 0 3.2q.6 1.4-1.8 .6a13.3 8.2 0 0 1-13.2-8.200z" fill="#e9973b"/></g>
<ellipse cx="28.7" cy="30" rx="13" ry="8" transform="rotate(28 28.7 30)" fill="#e9973b"/>
<circle cx="22.1" cy="26.9" r="2.5" fill="#3c7ed9"/>
<circle cx="27.4" cy="24.4" r="2.2" fill="#5cb93a"/>
<circle cx="33.8" cy="26.6" r="1.8" fill="#f3c136"/>
<circle cx="38.4" cy="33.8" r="1.9" fill="#e8541e"/>
<circle cx="25.8" cy="34.4" r="2.1" fill="#4a8be0"/>
<ellipse cx="33.3" cy="31.7" rx="2" ry="1.6" fill="#2b2f3a"/>
<path d="M30.5 40.6l3-4.400l-1.600 6.200z" fill="#40495a"/>
</svg>
</div>
<div class="b btn" style="left:1553.5px;top:1191px;width:56.25px;height:61.5px;"><svg width="57" height="62" viewBox="0 0 57 62">
<path d="M15.5 18.2V42.900H40.300zM19.800 30.100L28.300 37.600H19.800z" fill="#a3b0bd" fill-rule="evenodd"/>
<path d="M15.500 18.200L40.300 42.900L37.600 42.900L16.800 21.800z" fill="#d3dbe3"/>
<path d="M15.500 40.500H38V42.900H15.500z" fill="#93a6ba"/>
</svg>
</div>
<span class="t" id="t0" style="left:24.50px;top:31.38px;font-size:22px;color:#f1f2f4;font-weight:400;transform:scaleX(0.9736)">Stable Diffusion checkpoint</span>
<span class="t" id="t1" style="left:51.75px;top:79.38px;font-size:22px;color:#f1f2f4;font-weight:400;transform:scaleX(0.9519)">playground-v2.fp16.safetensors [0411e98847]</span>
<span class="t" id="t2" style="left:52.25px;top:164.84px;font-size:25px;color:#ffffff;font-weight:400;transform:scaleX(1.0174)">txt2img</span>
<span class="t" id="t3" style="left:187.25px;top:164.84px;font-size:25px;color:#9ca3af;font-weight:400;transform:scaleX(1.0081)">img2img</span>
<span class="t" id="t4" style="left:335.75px;top:164.84px;font-size:25px;color:#9ca3af;font-weight:400;transform:scaleX(0.9067)">Extras</span>
<span class="t" id="t5" style="left:453.75px;top:164.84px;font-size:25px;color:#9ca3af;font-weight:400;transform:scaleX(0.9166)">PNG Info</span>
<span class="t" id="t6" style="left:601.75px;top:164.84px;font-size:25px;color:#9ca3af;font-weight:400;transform:scaleX(0.9623)">Checkpoint Merger</span>
<span class="t" id="t7" style="left:858.25px;top:164.84px;font-size:25px;color:#9ca3af;font-weight:400;transform:scaleX(0.9682)">Train</span>
<span class="t" id="t8" style="left:966.75px;top:164.84px;font-size:25px;color:#9ca3af;font-weight:400;transform:scaleX(0.9778)">Deforum</span>
<span class="t" id="t9" style="left:1114.50px;top:164.84px;font-size:25px;color:#9ca3af;font-weight:400;transform:scaleX(0.9449)">Wildcards Manager</span>
<span class="t" id="t10" style="left:1371.75px;top:164.84px;font-size:25px;color:#9ca3af;font-weight:400;transform:scaleX(0.9713)">Settings</span>
<span class="t" id="t11" style="left:1512.75px;top:164.84px;font-size:25px;color:#9ca3af;font-weight:400;transform:scaleX(0.9424)">Extensions</span>
<span class="t" id="t12" style="left:63.25px;top:241.13px;font-size:22px;color:#f1f2f4;font-weight:400;transform:scaleX(0.9652)">Laboratory for testing cutting edge AI, open to the public</span>
<span class="t" id="t13" style="left:63.25px;top:401.13px;font-size:22px;color:#6f7886;font-weight:400;transform:scaleX(0.9473)">Negative prompt (press Ctrl+Enter or Alt+Enter to generate)</span>
<span class="t" id="t14" style="left:1245.00px;top:207.22px;font-size:21px;color:#f1f2f4;font-weight:400;transform:scaleX(1.0049)">11/75</span>
<span class="t" id="t15" style="left:1255.50px;top:367.22px;font-size:21px;color:#f1f2f4;font-weight:400;transform:scaleX(0.9969)">0/75</span>
<span class="t" id="t16" style="left:1566.75px;top:263.61px;font-size:24.5px;color:#ffffff;font-weight:700;transform:scaleX(0.9485)">Generate</span>
<span class="t" id="t17" style="left:72.50px;top:571.09px;font-size:25px;color:#ffffff;font-weight:400;transform:scaleX(0.9701)">Generation</span>
<span class="t" id="t18" style="left:245.75px;top:571.09px;font-size:25px;color:#9ca3af;font-weight:400;transform:scaleX(0.9714)">Textual Inversion</span>
<span class="t" id="t19" style="left:481.75px;top:571.09px;font-size:25px;color:#9ca3af;font-weight:400;transform:scaleX(0.9911)">Hypernetworks</span>
<span class="t" id="t20" style="left:699.75px;top:571.09px;font-size:25px;color:#9ca3af;font-weight:400;transform:scaleX(0.9794)">Checkpoints</span>
<span class="t" id="t21" style="left:887.75px;top:571.09px;font-size:25px;color:#9ca3af;font-weight:400;transform:scaleX(0.9541)">Lora</span>
<span class="t" id="t22" style="left:66.25px;top:646.88px;font-size:22px;color:#f1f2f4;font-weight:400;transform:scaleX(0.9812)">Sampling method</span>
<span class="t" id="t23" style="left:93.75px;top:695.38px;font-size:22px;color:#f1f2f4;font-weight:400;transform:scaleX(0.8906)">DPM++ 2M Karras</span>
<span class="t" id="t24" style="left:119.50px;top:767.28px;font-size:24px;color:#f1f2f4;font-weight:400;transform:scaleX(0.9963)">Hires. fix</span>
<span class="t" id="t25" style="left:511.75px;top:646.88px;font-size:22px;color:#f1f2f4;font-weight:400;transform:scaleX(0.9556)">Sampling steps</span>
<span class="t" id="t26" style="left:856.75px;top:649.72px;font-size:21px;color:#f1f2f4;font-weight:400;transform:scaleX(0.9418)">40</span>
<span class="t" id="t27" style="left:564.75px;top:767.28px;font-size:24px;color:#f1f2f4;font-weight:400;transform:scaleX(1.0016)">Refiner</span>
<span class="t" id="t28" style="left:66.25px;top:828.38px;font-size:22px;color:#f1f2f4;font-weight:400;transform:scaleX(1.0000)">Width</span>
<span class="t" id="t29" style="left:764.50px;top:831.72px;font-size:21px;color:#f1f2f4;font-weight:400;transform:scaleX(0.9311)">1024</span>
<span class="t" id="t30" style="left:66.25px;top:918.38px;font-size:22px;color:#f1f2f4;font-weight:400;transform:scaleX(1.0025)">Height</span>
<span class="t" id="t31" style="left:764.50px;top:921.47px;font-size:21px;color:#f1f2f4;font-weight:400;transform:scaleX(0.9311)">1024</span>
<span class="t" id="t32" style="left:66.25px;top:1021.88px;font-size:22px;color:#f1f2f4;font-weight:400;transform:scaleX(0.9747)">Batch count</span>
<span class="t" id="t33" style="left:862.50px;top:1024.47px;font-size:21px;color:#f1f2f4;font-weight:400;transform:scaleX(0.8556)">4</span>
<span class="t" id="t34" style="left:66.25px;top:1110.38px;font-size:22px;color:#f1f2f4;font-weight:400;transform:scaleX(0.9286)">Batch size</span>
<span class="t" id="t35" style="left:863.00px;top:1113.47px;font-size:21px;color:#f1f2f4;font-weight:400;transform:scaleX(0.7701)">1</span>
<span class="t" id="t36" style="left:66.25px;top:1192.88px;font-size:22px;color:#f1f2f4;font-weight:400;transform:scaleX(0.8620)">CFG Scale</span>
<span class="t" id="t37" style="left:862.50px;top:1195.97px;font-size:21px;color:#f1f2f4;font-weight:400;transform:scaleX(0.8556)">3</span>
<span class="t" id="t38" style="left:66.25px;top:1273.38px;font-size:22px;color:#f1f2f4;font-weight:400;transform:scaleX(0.9000)">Seed</span>
</div>
</body></html>
